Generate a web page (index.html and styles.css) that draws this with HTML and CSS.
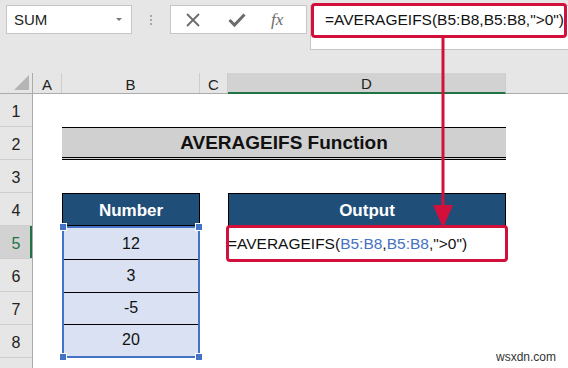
FILE: index.html
```html
<!DOCTYPE html>
<html lang="en">
<head>
    <meta charset="UTF-8">
    <title>AVERAGEIFS Function</title>
    <link rel="stylesheet" href="styles.css">
</head>
<body>
    <div class="toolbar">
        <div class="name-box">
            <span>SUM</span>
            <span class="drop"></span>
        </div>
        <div class="grip"><i></i><i></i><i></i></div>
        <div class="icon-box">
            <svg class="ico" width="16" height="16" viewBox="0 0 16 16">
                <path d="M2 2 L14 14 M14 2 L2 14" stroke="#6b6b6b" stroke-width="1.8" fill="none"/>
            </svg>
            <svg class="ico" width="18" height="16" viewBox="0 0 18 16">
                <path d="M1.5 8 L6.5 13 L16.5 2.5" stroke="#6b6b6b" stroke-width="3" fill="none"/>
            </svg>
            <span class="fx">fx</span>
        </div>
        <div class="formula-box">=AVERAGEIFS(B5:B8,B5:B8,"&gt;0")</div>
    </div>

    <div class="sheet">
        <div class="row-heads">
            <div class="corner"><span class="tri"></span></div>
            <div class="rh">1</div>
            <div class="rh">2</div>
            <div class="rh">3</div>
            <div class="rh">4</div>
            <div class="rh active">5</div>
            <div class="rh">6</div>
            <div class="rh">7</div>
            <div class="rh">8</div>
            <div class="rh"></div>
        </div>
        <div class="main">
            <div class="col-heads">
                <div class="ch col-a">A</div>
                <div class="ch col-b">B</div>
                <div class="ch col-c">C</div>
                <div class="ch col-d active">D</div>
                <div class="ch rest"></div>
            </div>
            <div class="cells">
                <div class="title">AVERAGEIFS Function</div>
                <div class="head head-num">Number</div>
                <div class="head head-out">Output</div>
                <div class="range">
                    <div class="val">12</div>
                    <div class="val">3</div>
                    <div class="val">-5</div>
                    <div class="val last">20</div>
                    <span class="handle tl"></span>
                    <span class="handle tr"></span>
                    <span class="handle bl"></span>
                    <span class="handle br"></span>
                </div>
                <div class="formula-cell">=AVERAGEIFS(<span class="ref">B5:B8</span>,<span class="ref">B5:B8</span>,"&gt;0")</div>
            </div>
        </div>
    </div>

    <!-- red callout box + arrow -->
    <div class="callout"></div>
    <svg class="arrow" width="30" height="200" viewBox="0 0 30 200">
        <line x1="15" y1="0" x2="15" y2="180" stroke="#d2103c" stroke-width="3"/>
        <polygon points="5,170 25,170 15,193" fill="#d2103c"/>
    </svg>

    <div class="mark">wsxdn.com</div>
</body>
</html>
```

FILE: styles.css
```css
body {
    margin: 0;
    width: 568px;
    height: 368px;
    overflow: hidden;
    position: relative;
    background: #fff;
    font-family: "Liberation Sans", Arial, sans-serif;
    color: #222;
}

.toolbar {
    height: 73px;
    background: #e6e6e6;
    display: flex;
    align-items: flex-start;
    padding-top: 5px;
    box-sizing: border-box;
}

.name-box {
    margin-left: 6px;
    width: 126px;
    height: 29px;
    box-sizing: border-box;
    background: #fff;
    border: 1px solid #c6c6c6;
    display: flex;
    align-items: center;
    justify-content: space-between;
    padding: 0 9px 0 7px;
    font-size: 15px;
}
.drop {
    width: 0;
    height: 0;
    border-left: 3px solid transparent;
    border-right: 3px solid transparent;
    border-top: 3px solid #777;
}

.grip {
    width: 38px;
    height: 29px;
    display: flex;
    flex-direction: column;
    align-items: center;
    justify-content: center;
    gap: 2px;
}
.grip i {
    width: 2px;
    height: 2px;
    background: #a8a8a8;
}

.icon-box {
    width: 137px;
    height: 29px;
    box-sizing: border-box;
    background: #fff;
    border: 1px solid #c6c6c6;
    display: flex;
    align-items: center;
    padding-left: 14px;
    gap: 27px;
}
.fx {
    font-family: "Liberation Serif", "Times New Roman", serif;
    font-style: italic;
    font-size: 17px;
    color: #6b6b6b;
    margin-left: -2px;
}

.formula-box {
    margin-left: 3px;
    flex: 1;
    height: 45px;
    box-sizing: border-box;
    background: #fff;
    border: 1px solid #c6c6c6;
    border-right: none;
    padding: 5px 0 0 14px;
    font-size: 15.5px;
    color: #111;
}

.sheet {
    display: flex;
    height: 295px;
}

.row-heads {
    width: 33px;
    flex-shrink: 0;
    background: #e6e6e6;
    border-right: 1px solid #ababab;
    box-sizing: border-box;
}
.corner {
    height: 21px;
    border-bottom: 1px solid #ababab;
    box-sizing: border-box;
    position: relative;
}
.tri {
    position: absolute;
    right: 3px;
    bottom: 3px;
    width: 0;
    height: 0;
    border-left: 15px solid transparent;
    border-bottom: 15px solid #b5b5b5;
}
.rh {
    height: 33px;
    border-bottom: 1px solid #cdcdcd;
    box-sizing: border-box;
    display: flex;
    align-items: center;
    justify-content: center;
    padding-top: 4px;
    font-size: 16px;
    color: #222;
}
.rh.active {
    background: #d2d2d2;
    color: #217346;
    box-shadow: inset -2px 0 0 #217346;
}

.main {
    flex: 1;
    display: flex;
    flex-direction: column;
}

.col-heads {
    height: 21px;
    display: flex;
    background: #e6e6e6;
    border-bottom: 1px solid #ababab;
    box-sizing: border-box;
}
.ch {
    border-right: 1px solid #cdcdcd;
    box-sizing: border-box;
    display: flex;
    align-items: center;
    justify-content: center;
    font-size: 15px;
    padding-top: 2px;
}
.col-a { width: 29px; }
.col-b { width: 138px; }
.col-c { width: 28px; }
.col-d { width: 278px; }
.rest { flex: 1; border-right: none; }
.ch.active {
    background: #d2d2d2;
    border-bottom: 2px solid #217346;
    margin-bottom: -1px;
}

.cells {
    display: grid;
    grid-template-columns: 29px 138px 28px 278px 1fr;
    grid-template-rows: repeat(9, 33px);
}

.title {
    grid-column: 2 / 5;
    grid-row: 2;
    background: #d0d0d0;
    border-top: 1px solid #000;
    border-bottom: 3px double #000;
    display: flex;
    align-items: center;
    justify-content: center;
    font-weight: bold;
    font-size: 19px;
    color: #111;
}

.head {
    grid-row: 4;
    background: #1f4e79;
    border: 1px solid #000;
    color: #fff;
    font-weight: bold;
    font-size: 17px;
    display: flex;
    align-items: center;
    justify-content: center;
    padding-top: 2px;
}
.head-num { grid-column: 2; }
.head-out { grid-column: 4; }

.range {
    grid-column: 2;
    grid-row: 5 / 9;
    position: relative;
    display: flex;
    flex-direction: column;
    background: #d9e1f2;
    border: 2px solid #4472c4;
}
.val {
    flex: 1;
    border-bottom: 1px solid #000;
    display: flex;
    align-items: center;
    justify-content: center;
    font-size: 16px;
    color: #111;
}
.val.last { border-bottom: none; }

.handle {
    position: absolute;
    width: 6px;
    height: 6px;
    background: #4472c4;
    border: 1px solid #fff;
}
.tl { left: -5px; top: -5px; }
.tr { right: -5px; top: -5px; }
.bl { left: -5px; bottom: -5px; }
.br { right: -5px; bottom: -5px; }

.formula-cell {
    grid-column: 4;
    grid-row: 5;
    display: flex;
    align-items: center;
    font-size: 15.5px;
    color: #111;
    white-space: nowrap;
    padding-top: 2px;
}
.ref { color: #4472c4; }

.callout {
    position: absolute;
    left: 226px;
    top: 225px;
    width: 282px;
    height: 37px;
    box-sizing: border-box;
    border: 3px solid #d2103c;
    border-radius: 4px;
}
.callout::before {
    content: "";
    position: absolute;
    left: 82px;
    top: -225px;
    width: 256px;
    height: 35px;
    box-sizing: border-box;
    border: 3px solid #d2103c;
    border-radius: 4px;
}

.arrow {
    position: absolute;
    left: 428px;
    top: 35px;
}

.mark {
    position: absolute;
    right: 12px;
    bottom: 4px;
    font-size: 12px;
    color: #333;
}
```
